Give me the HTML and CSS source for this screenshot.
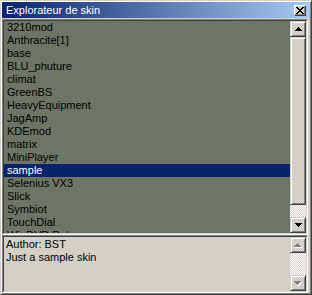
FILE: index.html
```html
<!DOCTYPE html>
<html lang="fr">
<head>
    <meta charset="UTF-8">
    <title>Explorateur de skin</title>
<link rel="stylesheet" href="styles.css">
</head>
<body>

<div class="window">

    <div class="titlebar">
        <span class="title">Explorateur de skin</span>
        <span class="close">
            <svg width="8" height="7" viewBox="0 0 8 7"><path d="M0 0h2v1h1v1h2V1h1V0h2v1H7v1H6v1H5v1h1v1h1v1h1v1H6V6H5V5H3v1H2v1H0V6h1V5h1V4h1V3H2V2H1V1H0z" fill="#000"/></svg>
        </span>
    </div>

    <div class="box listbox">
        <div class="box-in">
            <ul class="items">
                <li>3210mod</li>
                <li>Anthracite[1]</li>
                <li>base</li>
                <li>BLU_phuture</li>
                <li>climat</li>
                <li>GreenBS</li>
                <li>HeavyEquipment</li>
                <li>JagAmp</li>
                <li>KDEmod</li>
                <li>matrix</li>
                <li>MiniPlayer</li>
                <li class="selected">sample</li>
                <li>Selenius VX3</li>
                <li>Slick</li>
                <li>Symbiot</li>
                <li>TouchDial</li>
                <li>WinDVD Deluxe</li>
            </ul>
            <div class="vscroll">
                <span class="sbtn"><svg width="7" height="4"><path d="M3 0h1v1h1v1h1v1h1v1H0V3h1V2h1V1h1z" fill="#000"/></svg></span>
                <span class="thumb"></span>
                <span class="track"></span>
                <span class="sbtn"><svg width="7" height="4"><path d="M0 0h7v1H6v1H5v1H4v1H3V3H2V2H1V1H0z" fill="#000"/></svg></span>
            </div>
        </div>
    </div>

    <div class="box infobox">
        <div class="box-in">
            <div class="info">
                Author: BST<br>
                Just a sample skin
            </div>
            <div class="vscroll">
                <span class="sbtn off"><svg width="8" height="5"><path d="M4 1h1v1h1v1h1v1h1v1H1V4h1V3h1V2h1z" fill="#fff"/><path d="M3 0h1v1h1v1h1v1h1v1H0V3h1V2h1V1h1z" fill="#808080"/></svg></span>
                <span class="track"></span>
                <span class="sbtn off"><svg width="8" height="5"><path d="M1 1h7v1H7v1H6v1H5v1H4V4H3V3H2V2H1z" fill="#fff"/><path d="M0 0h7v1H6v1H5v1H4v1H3V3H2V2H1V1H0z" fill="#808080"/></svg></span>
            </div>
        </div>
    </div>

</div>

</body>
</html>
```

FILE: styles.css
```css
body {
    margin: 0;
    font-family: "Liberation Sans", Arial, sans-serif;
    font-size: 11px;
}

.window {
    box-sizing: border-box;
    width: 312px;
    height: 295px;
    display: flex;
    flex-direction: column;
    background: #d4d0c8;
    border: 1px solid;
    border-color: #d4d0c8 #404040 #404040 #d4d0c8;
    padding: 1px;
    box-shadow: inset 1px 1px #fff, inset -1px -1px #808080;
}

.titlebar {
    height: 16px;
    flex: none;
    display: flex;
    align-items: center;
    justify-content: space-between;
    background: linear-gradient(to right, #0a246a, #a6caf0);
    color: #fff;
    margin-bottom: 1px;
}

.title {
    padding-left: 4px;
    font-size: 11px;
    line-height: 16px;
}

.close {
    box-sizing: border-box;
    width: 12px;
    height: 11px;
    margin-right: 4px;
    display: flex;
    align-items: center;
    justify-content: center;
    background: #d4d0c8;
    border: 1px solid;
    border-color: #fff #404040 #404040 #fff;
    box-shadow: inset -1px -1px #808080;
}

/* sunken boxes */
.box {
    border: 1px solid;
    border-color: #808080 #fff #fff #808080;
    margin-right: 2px;
    flex: none;
}

.box-in {
    height: 100%;
    box-sizing: border-box;
    display: flex;
    border: 1px solid;
    border-color: #404040 #d4d0c8 #d4d0c8 #404040;
}

.listbox {
    height: 216px;
    box-sizing: border-box;
}

.infobox {
    height: 58px;
    box-sizing: border-box;
}

.items {
    flex: 1;
    margin: 0;
    padding: 0;
    list-style: none;
    overflow: hidden;
    background: #6d7566;
    color: #000;
}

.items li {
    height: 13px;
    line-height: 13px;
    padding-left: 3px;
    white-space: nowrap;
}

.items li.selected {
    background: #0a246a;
    color: #fff;
}

.info {
    flex: 1;
    padding: 1px 2px;
    line-height: 13px;
    color: #000;
}

.vscroll {
    width: 16px;
    flex: none;
    display: flex;
    flex-direction: column;
}

.sbtn, .thumb {
    box-sizing: border-box;
    background: #d4d0c8;
    border: 1px solid;
    border-color: #d4d0c8 #404040 #404040 #d4d0c8;
    box-shadow: inset 1px 1px #fff, inset -1px -1px #808080;
}

.sbtn {
    height: 16px;
    flex: none;
    display: flex;
    align-items: center;
    justify-content: center;
}

.sbtn svg {
    display: block;
}

.thumb {
    height: 168px;
    flex: none;
}

.track {
    flex: 1;
    background: repeating-conic-gradient(#fff 0 25%, #d4d0c8 0 50%) 0 0 / 2px 2px;
}
```
